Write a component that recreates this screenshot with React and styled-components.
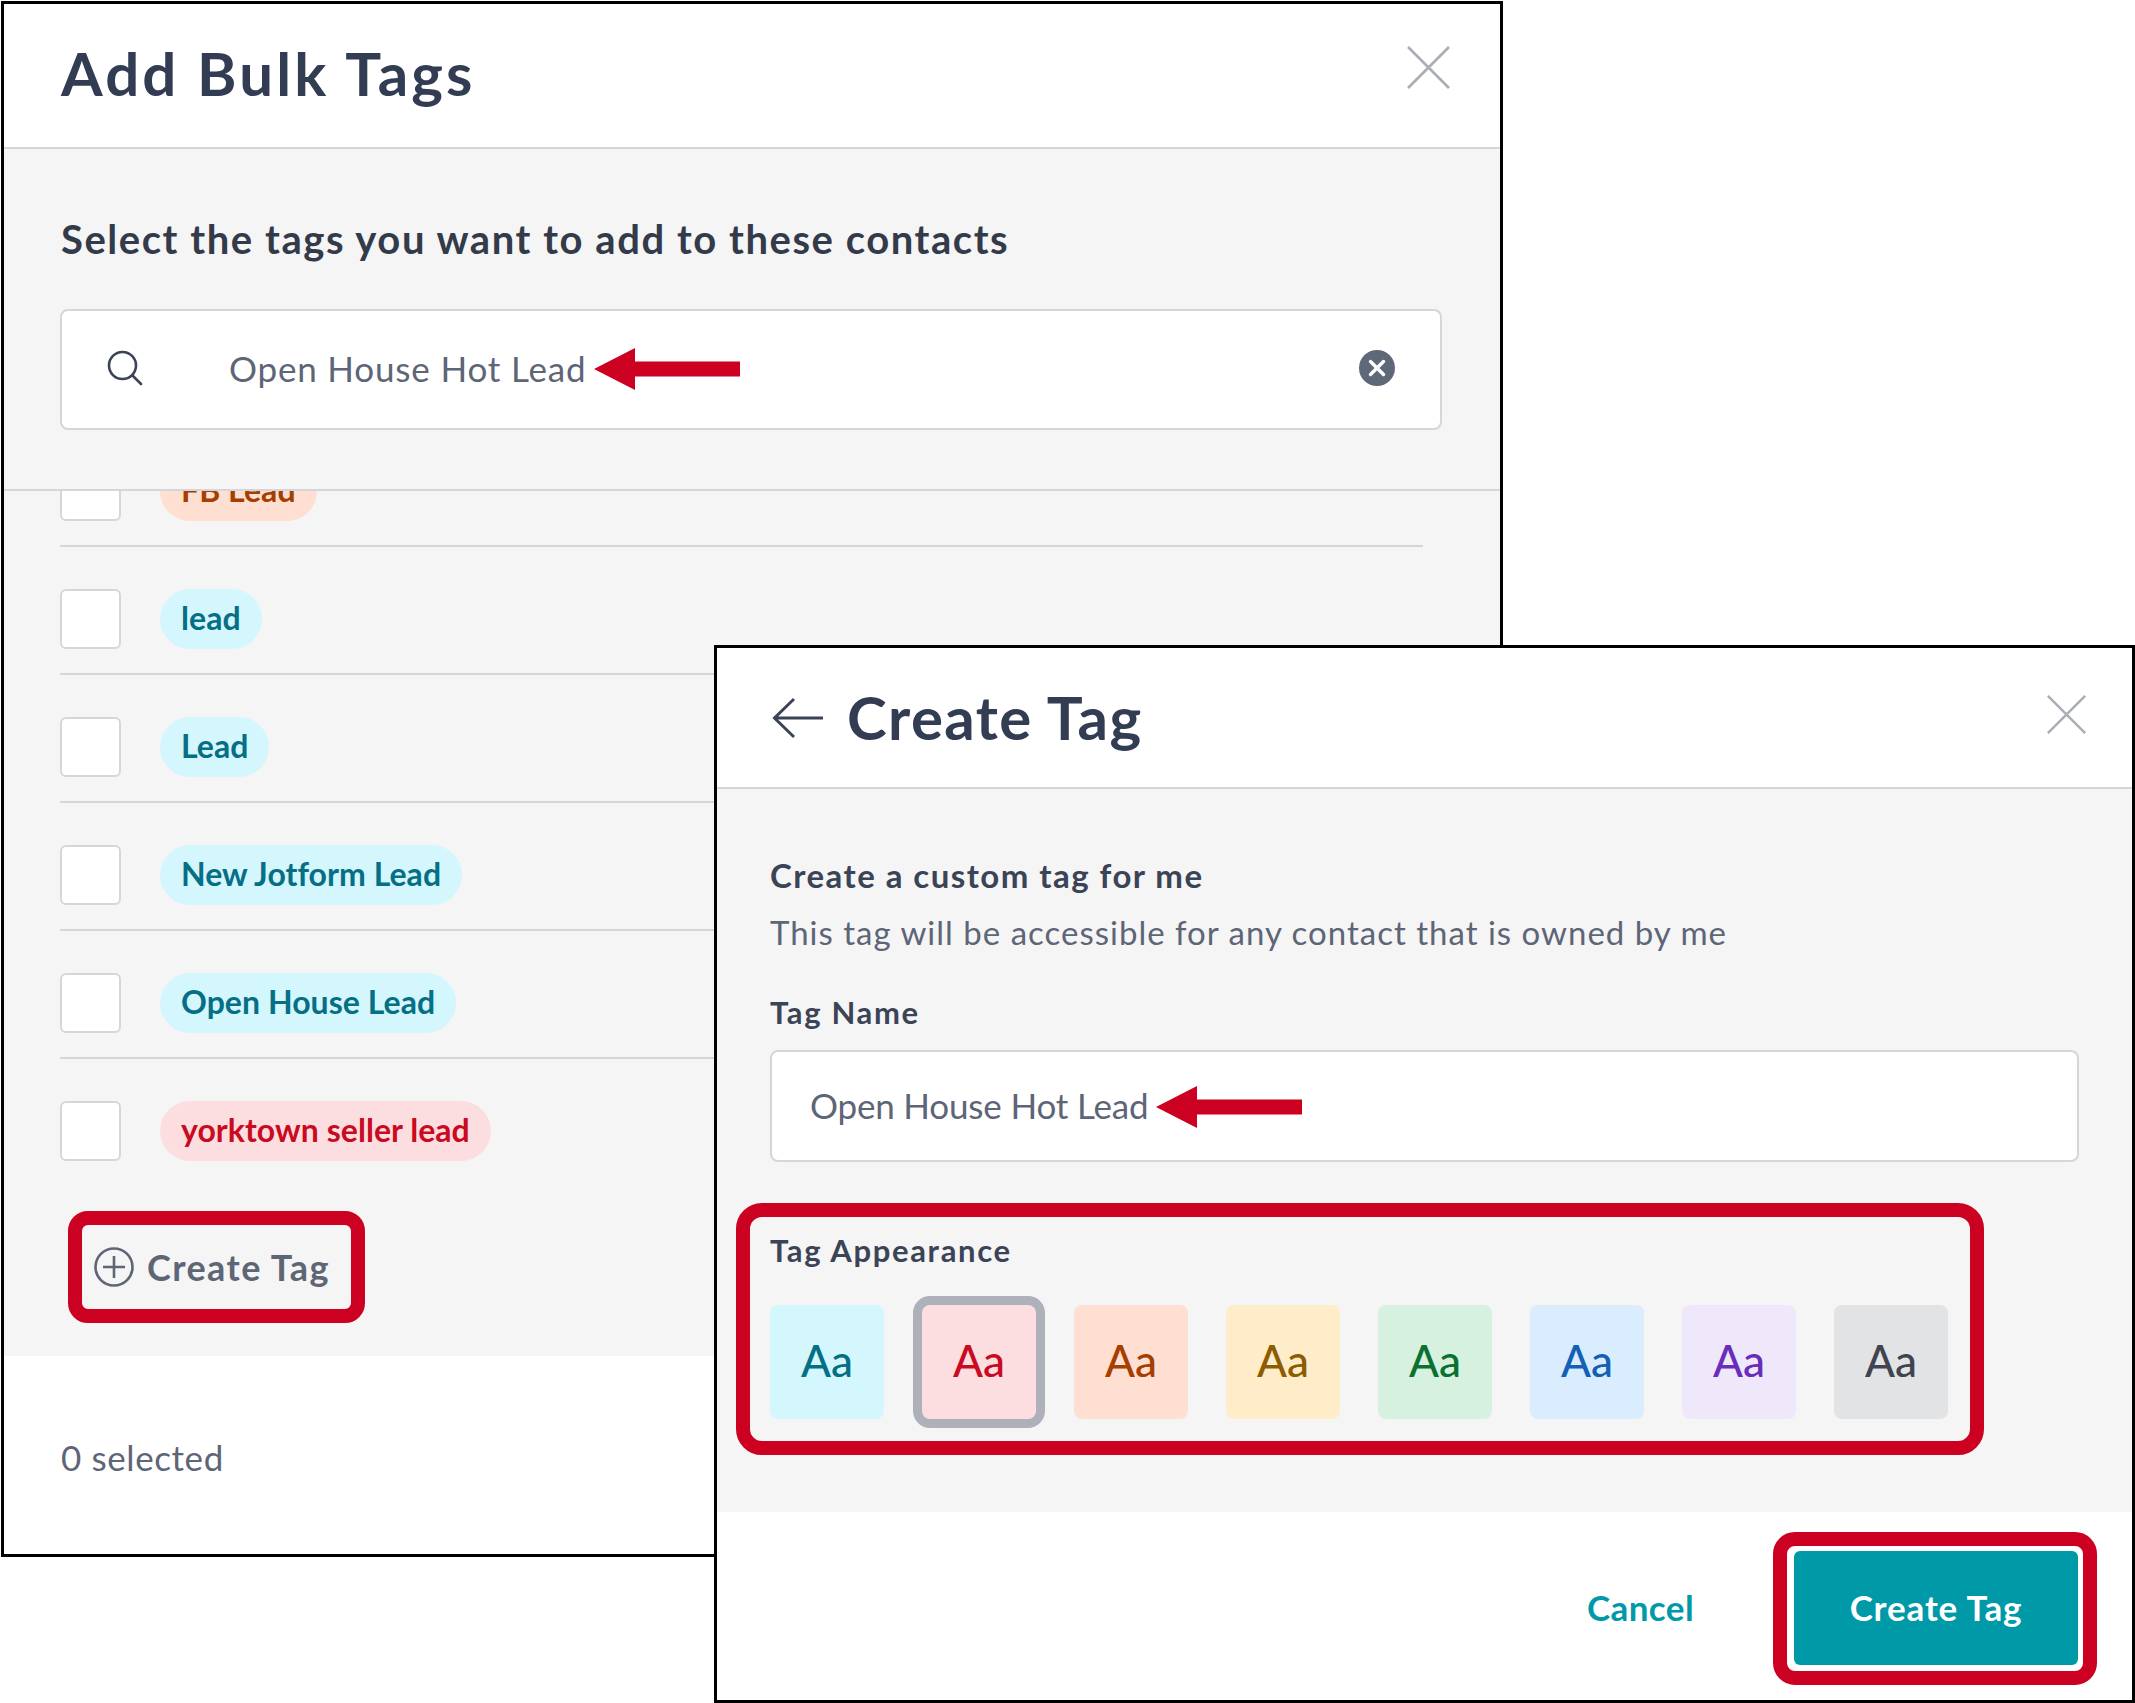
import React from "react";
import styled, { createGlobalStyle } from "styled-components";

const Global = createGlobalStyle`
  html, body { margin: 0; padding: 0; background: #fff; }
  body { font-family: "Lato", "Open Sans", sans-serif; width: 2135px; height: 1703px; overflow: hidden; }
  * { box-sizing: border-box; }
`;

const C = {
  title: "#323c52", text: "#3b4456", muted: "#5d6576", line: "#d3d6db", bg: "#f5f5f5",
  red: "#cc0020", teal: "#0099a8",
};

const Canvas = styled.div`
  position: relative;
  width: 2135px;
  height: 1703px;
  padding: 1px 0 0 1px;
`;

const BulkWindow = styled.section`
  width: 1502px;
  height: 1556px;
  border: 3px solid #000;
  background: #fff;
  display: flex;
  flex-direction: column;
`;

const TagWindow = styled.section`
  position: absolute;
  left: 714px;
  top: 645px;
  width: 1421px;
  height: 1058px;
  border: 3px solid #000;
  background: #fff;
  display: flex;
  flex-direction: column;
`;

const Header = styled.header`
  height: ${(p) => p.$h}px;
  flex: none;
  display: flex;
  align-items: center;
  justify-content: space-between;
  padding: ${(p) => p.$pad};
  border-bottom: 2px solid ${C.line};
`;

const TitleGroup = styled.div`
  display: flex;
  align-items: center;
  gap: 24px;
`;

const Title = styled.h1`
  margin: 0 0 ${(p) => p.$mb}px;
  font-size: 60px;
  font-weight: 700;
  line-height: 70px;
  color: ${C.title};
  letter-spacing: ${(p) => p.$ls}px;
`;

const IconBtn = styled.span`
  display: flex;
  flex: none;
  margin-bottom: ${(p) => p.$mb}px;
`;

const SearchZone = styled.div`
  flex: none;
  height: 342px;
  background: ${C.bg};
  border-bottom: 2px solid ${C.line};
  padding: 65px 58px 0 56px;
`;

const Heading = styled.h2`
  margin: 0 0 45px;
  padding-left: 1px;
  font-size: 40px;
  line-height: 50px;
  font-weight: 700;
  color: #333b4a;
  letter-spacing: 1.55px;
`;

const Field = styled.div`
  background: #fff;
  border: 2px solid ${C.line};
  border-radius: 8px;
  height: ${(p) => p.$h}px;
  display: flex;
  align-items: center;
  padding: 0 45px 3px ${(p) => p.$pl}px;
`;

const FieldText = styled.span`
  font-size: 35px;
  line-height: 44px;
  color: ${C.muted};
  letter-spacing: ${(p) => p.$ls}px;
  white-space: nowrap;
`;

const SearchSlot = styled.span`
  display: flex;
  width: 122px;
  flex: none;
`;

const ClearSlot = styled.span`
  display: flex;
  margin-left: auto;
`;

const Arrow = styled.svg`
  flex: none;
  display: block;
  margin: ${(p) => p.$mt}px 0 0 8px;
`;

const ListZone = styled.div`
  flex: 1;
  min-height: 0;
  background: ${C.bg};
  overflow: hidden;
  padding: 0 56px;
`;

const List = styled.ul`
  list-style: none;
  margin: -72px 0 0;
  padding: 0;
  width: 1363px;
`;

const Row = styled.li`
  display: flex;
  align-items: center;
  gap: 39px;
  padding: 42px 0 24px;
  border-bottom: 2px solid ${(p) => (p.$last ? "transparent" : C.line)};
`;

const Checkbox = styled.span`
  flex: none;
  width: 61px;
  height: 60px;
  background: #fff;
  border: 2px solid ${C.line};
  border-radius: 6px;
`;

const Pill = styled.span`
  display: inline-flex;
  align-items: center;
  height: 60px;
  padding: 0 21px 4px;
  border-radius: 30px;
  font-size: 32px;
  font-weight: 700;
  letter-spacing: 0.05px;
  white-space: nowrap;
  background: ${(p) => p.$bg};
  color: ${(p) => p.$fg};
`;

const CreateHighlight = styled.div`
  display: inline-flex;
  align-items: center;
  gap: 13px;
  height: 112px;
  width: 297px;
  margin: 24px 0 0 8px;
  padding-left: 12px;
  border: 14px solid ${C.red};
  border-radius: 20px;
  font-size: 36px;
  font-weight: 700;
  color: #5e6675;
  white-space: nowrap;
  letter-spacing: 1.4px;
`;

const FooterA = styled.footer`
  flex: none;
  height: 198px;
  display: flex;
  align-items: center;
  padding: 3px 57px 0;
  font-size: 35px;
  color: ${C.muted};
  letter-spacing: 0.6px;
`;

const TagBody = styled.div`
  flex: 1;
  min-height: 0;
  background: ${C.bg};
  padding: 64px 53px 0;
`;

const SubHeading = styled.h3`
  margin: 0;
  font-size: 33px;
  line-height: 44px;
  font-weight: 700;
  color: ${C.text};
  letter-spacing: 1.45px;
`;

const Description = styled.p`
  margin: 13px 0 38px;
  font-size: 33px;
  line-height: 44px;
  color: ${C.muted};
  letter-spacing: 1px;
`;

const FieldLabel = styled.div`
  font-size: 31px;
  line-height: 40px;
  font-weight: 700;
  color: ${C.text};
  letter-spacing: 1.65px;
  margin-bottom: ${(p) => p.$mb}px;
`;

const AppearanceBox = styled.div`
  width: 1248px;
  height: 252px;
  margin: 41px 0 0 -34px;
  padding: 13px 20px 0 20px;
  border: 14px solid ${C.red};
  border-radius: 26px;
`;

const SwatchRow = styled.div`
  display: flex;
  gap: 38px;
`;

const Swatch = styled.div`
  width: 114px;
  height: 114px;
  flex: none;
  display: flex;
  align-items: center;
  justify-content: center;
  padding-bottom: 4px;
  border-radius: 8px;
  font-size: 44px;
  font-weight: 500;
  background: ${(p) => p.$bg};
  color: ${(p) => p.$fg};
  box-shadow: ${(p) => (p.$selected ? "0 0 0 9px #aeb1b9" : "none")};
`;

const TagFooter = styled.footer`
  flex: none;
  height: 188px;
  display: flex;
  align-items: flex-start;
  justify-content: flex-end;
  gap: 79px;
  padding: 20px 35px 0 0;
`;

const Cancel = styled.span`
  font-size: 35px;
  line-height: 44px;
  font-weight: 700;
  color: ${C.teal};
  margin-top: 53px;
  letter-spacing: 0.4px;
`;

const ButtonFrame = styled.div`
  width: 324px;
  height: 153px;
  padding: 5px 5px 6px 7px;
  border: 14px solid ${C.red};
  border-radius: 22px;
  display: flex;
`;

const PrimaryButton = styled.button`
  flex: 1;
  border: 0;
  padding: 0 0 2px;
  border-radius: 6px;
  background: ${C.teal};
  color: #fff;
  font-family: inherit;
  font-size: 35px;
  font-weight: 700;
  letter-spacing: 0.85px;
`;

const CloseIcon = ({ size }) => (
  <svg width={size} height={size} viewBox="0 0 44 44" fill="none" stroke="#a9adb5" strokeWidth="2.6">
    <path d="M2 2 42 42M42 2 2 42" />
  </svg>
);

const RedArrow = ({ mt }) => (
  <Arrow $mt={mt} width="146" height="42" viewBox="0 0 146 42">
    <path d="M0 21 41 0V13.5H146V28.5H41V42Z" fill={C.red} />
  </Arrow>
);

const rows = [
  ["FB Lead", "#fedfd1", "#a53e00"],
  ["lead", "#d4f6fd", "#056f85"],
  ["Lead", "#d4f6fd", "#056f85"],
  ["New Jotform Lead", "#d4f6fd", "#056f85"],
  ["Open House Lead", "#d4f6fd", "#056f85"],
  ["yorktown seller lead", "#fddee0", "#c90a20"],
];

const swatches = [
  ["#d4f6fd", "#056f85"],
  ["#fddee0", "#c90a20", true],
  ["#fedfd1", "#a53e00"],
  ["#ffedc9", "#8e5c00"],
  ["#d6f1df", "#0b7030"],
  ["#d9edfe", "#1460b4"],
  ["#efe8fa", "#6a2dbb"],
  ["#e2e3e5", "#3f4450"],
];

export default function App() {
  return (
    <Canvas>
      <Global />
      <BulkWindow>
        <Header $h={145} $pad="0 49px 0 57px">
          <Title $ls={3.1} $mb={5}>Add Bulk Tags</Title>
          <IconBtn $mb={16}>
            <CloseIcon size={45} />
          </IconBtn>
        </Header>
        <SearchZone>
          <Heading>Select the tags you want to add to these contacts</Heading>
          <Field $h={121} $pl={45}>
            <SearchSlot>
              <svg width="36" height="36" viewBox="0 0 36 36" fill="none" stroke="#3b4456" strokeWidth="2.6" strokeLinecap="round">
                <circle cx="15.5" cy="15.5" r="13.5" />
                <path d="M25.5 25.5 34 34" />
              </svg>
            </SearchSlot>
            <FieldText $ls={0.82}>Open House Hot Lead</FieldText>
            <RedArrow mt={1} />
            <ClearSlot>
              <svg width="36" height="36" viewBox="0 0 36 36">
                <circle cx="18" cy="18" r="18" fill="#5f6879" />
                <path d="M11.5 11.5 24.5 24.5M24.5 11.5 11.5 24.5" stroke="#fff" strokeWidth="3.4" strokeLinecap="round" />
              </svg>
            </ClearSlot>
          </Field>
        </SearchZone>
        <ListZone>
          <List>
            {rows.map(([label, bg, fg], i) => (
              <Row key={label} $last={i === rows.length - 1}>
                <Checkbox />
                <Pill $bg={bg} $fg={fg}>{label}</Pill>
              </Row>
            ))}
          </List>
          <CreateHighlight>
            <svg width="40" height="40" viewBox="0 0 40 40" fill="none" stroke="#5e6675" strokeWidth="2.6">
              <circle cx="20" cy="20" r="18.5" />
              <path d="M20 9V31M9 20H31" />
            </svg>
            Create Tag
          </CreateHighlight>
        </ListZone>
        <FooterA>0 selected</FooterA>
      </BulkWindow>

      <TagWindow>
        <Header $h={141} $pad="0 45px 0 55px">
          <TitleGroup>
            <svg width="51" height="42" viewBox="0 0 51 42" fill="none" stroke="#3b4456" strokeWidth="3">
              <path d="M51 21H3M22 2 2.5 21 22 40" />
            </svg>
            <Title $ls={1.4} $mb={2}>Create Tag</Title>
          </TitleGroup>
          <IconBtn $mb={7}>
            <CloseIcon size={41} />
          </IconBtn>
        </Header>
        <TagBody>
          <SubHeading>Create a custom tag for me</SubHeading>
          <Description>This tag will be accessible for any contact that is owned by me</Description>
          <FieldLabel $mb={18}>Tag Name</FieldLabel>
          <Field $h={112} $pl={38}>
            <FieldText $ls={-0.18}>Open House Hot Lead</FieldText>
            <RedArrow mt={4} />
          </Field>
          <AppearanceBox>
            <FieldLabel $mb={35}>Tag Appearance</FieldLabel>
            <SwatchRow>
              {swatches.map(([bg, fg, sel]) => (
                <Swatch key={bg} $bg={bg} $fg={fg} $selected={sel}>Aa</Swatch>
              ))}
            </SwatchRow>
          </AppearanceBox>
        </TagBody>
        <TagFooter>
          <Cancel>Cancel</Cancel>
          <ButtonFrame>
            <PrimaryButton>Create Tag</PrimaryButton>
          </ButtonFrame>
        </TagFooter>
      </TagWindow>
    </Canvas>
  );
}
